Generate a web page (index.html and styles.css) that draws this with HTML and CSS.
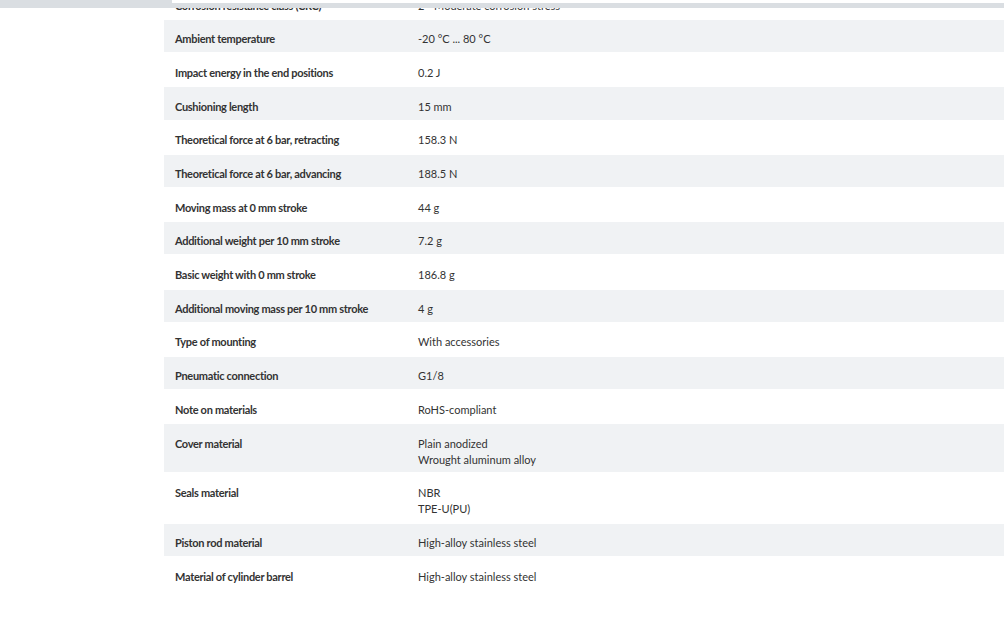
FILE: index.html
```html
<!DOCTYPE html>
<html lang="en">
<head>
<meta charset="utf-8">
<title>Technical data</title>
<link rel="stylesheet" href="styles.css">
</head>
<body>
<div class="topbar">
  <div class="topbar-left"></div>
  <div class="topbar-right"></div>
</div>
<main class="page">
  <div class="specs">
    <div class="row"><div class="label">Corrosion resistance class (CRC)</div><div class="value">2 - Moderate corrosion stress</div></div>
    <div class="row alt"><div class="label">Ambient temperature</div><div class="value">-20 °C ... 80 °C</div></div>
    <div class="row"><div class="label">Impact energy in the end positions</div><div class="value">0.2 J</div></div>
    <div class="row alt"><div class="label">Cushioning length</div><div class="value">15 mm</div></div>
    <div class="row"><div class="label">Theoretical force at 6 bar, retracting</div><div class="value">158.3 N</div></div>
    <div class="row alt"><div class="label">Theoretical force at 6 bar, advancing</div><div class="value">188.5 N</div></div>
    <div class="row"><div class="label">Moving mass at 0 mm stroke</div><div class="value">44 g</div></div>
    <div class="row alt"><div class="label">Additional weight per 10 mm stroke</div><div class="value">7.2 g</div></div>
    <div class="row"><div class="label">Basic weight with 0 mm stroke</div><div class="value">186.8 g</div></div>
    <div class="row alt"><div class="label">Additional moving mass per 10 mm stroke</div><div class="value">4 g</div></div>
    <div class="row"><div class="label">Type of mounting</div><div class="value">With accessories</div></div>
    <div class="row alt"><div class="label">Pneumatic connection</div><div class="value">G1/8</div></div>
    <div class="row"><div class="label">Note on materials</div><div class="value">RoHS-compliant</div></div>
    <div class="row alt"><div class="label">Cover material</div><div class="value">Plain anodized<br>Wrought aluminum alloy</div></div>
    <div class="row"><div class="label">Seals material</div><div class="value">NBR<br>TPE-U(PU)</div></div>
    <div class="row alt"><div class="label">Piston rod material</div><div class="value">High-alloy stainless steel</div></div>
    <div class="row"><div class="label">Material of cylinder barrel</div><div class="value">High-alloy stainless steel</div></div>
  </div>
</main>
</body>
</html>
```

FILE: styles.css
```css
html, body {
  margin: 0;
  padding: 0;
  background: #ffffff;
}

body {
  font-family: Lato, "Liberation Sans", sans-serif;
  font-size: 11px;
  color: #333333;
  overflow: hidden;
}

.topbar {
  position: fixed;
  top: 0;
  left: 0;
  right: 0;
  display: flex;
  z-index: 10;
}

.topbar-left {
  width: 172px;
  height: 7.5px;
  background: #dadee2;
}

.topbar-right {
  flex: 1;
  height: 4.5px;
  border-top: 3px solid #ffffff;
  background: #dadee2;
}

.page {
  padding-left: 164px;
  margin-top: -13.7px;
}

.specs {
  display: flex;
  flex-direction: column;
  gap: 1.5px;
}

.row {
  display: flex;
  line-height: 16px;
  padding: 11.3px 0 4.9px 0;
}

.row.alt {
  background: #f0f2f4;
}

.label {
  width: 243px;
  padding-left: 11px;
  font-weight: 700;
  letter-spacing: -0.3px;
  color: #333333;
}

.value {
  flex: 1;
  color: #333333;
}
```
